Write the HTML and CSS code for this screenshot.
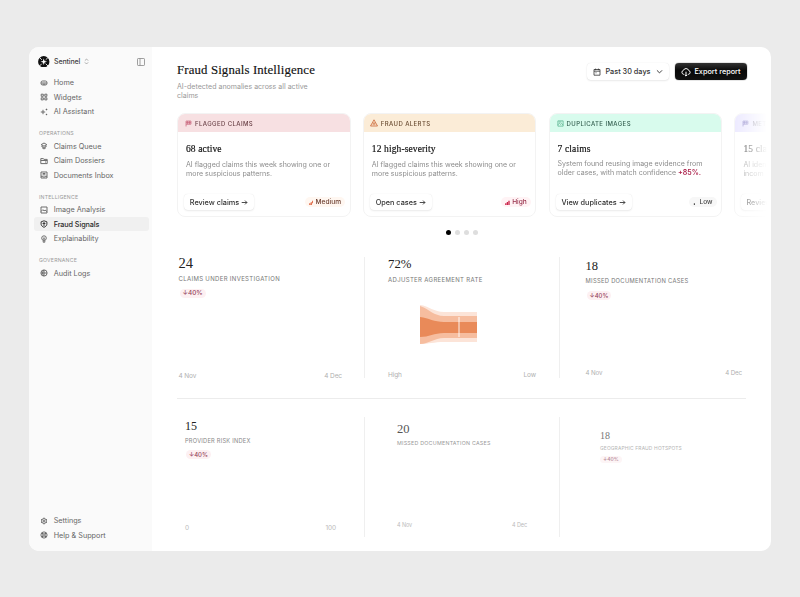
FILE: index.html
```html
<!DOCTYPE html>
<html lang="en">
<head>
<meta charset="utf-8">
<title>Fraud Signals Intelligence</title>
<link rel="stylesheet" href="styles.css">
</head>
<body>
<div class="window">
  <aside class="sidebar">
    <div class="brand">
      <svg class="logo" viewBox="0 0 12 12"><circle cx="6" cy="6" r="5.900"/><path d="M1.500 1.500 4 4M10.500 1.500 8 4M1.500 10.500 4 8M10.500 10.500 8 8" stroke="#fff" stroke-width=".9"/><path d="M6 2.600 6.900 5.100 9.400 6 6.900 6.900 6 9.400 5.100 6.900 2.600 6 5.100 5.100Z" fill="#fff"/></svg>
      <span class="brand-name">Sentinel</span>
      <svg class="updown" viewBox="0 0 6 8"><path d="M1 3l2-2 2 2M1 5l2 2 2-2"/></svg>
      <svg class="panel" viewBox="0 0 8 8"><rect x=".5" y=".5" width="7" height="7" rx=".7"/><path d="M3 .5v7"/></svg>
    </div>
    <nav>
      <a class="item"><svg viewBox="0 0 8 8"><rect x="1" y="2" width="6" height="4" rx="1.600"/><path d="M1 4h6M2.500 5.200h3"/></svg>Home</a>
      <a class="item"><svg viewBox="0 0 8 8"><path d="M1.200 1.200h2.100v2.100H1.200ZM4.800 1.200h2.100v2.100H4.800ZM1.200 4.800h2.100v2.100H1.200ZM4.800 4.800h2.100v2.100H4.800Z"/></svg>Widgets</a>
      <a class="item"><svg viewBox="0 0 8 8"><path d="M3 1.800v4.400M.8 4h4.400M6.500.7v1.600M5.700 1.500h1.600M6.500 5.800v1.400M5.800 6.500h1.400"/></svg>AI Assistant</a>
      <h2>OPERATIONS</h2>
      <a class="item"><svg viewBox="0 0 8 8"><path d="M4 1 6.800 2.600 4 4.200 1.200 2.600ZM1.200 4 4 5.600 6.800 4M2 5.600 4 7l2-1.400"/></svg>Claims Queue</a>
      <a class="item"><svg viewBox="0 0 8 8"><path d="M.8 1.600h2.400l.8.800h3.200v4.200H.8ZM.8 3.500h6.400M5 5h1"/></svg>Claim Dossiers</a>
      <a class="item"><svg viewBox="0 0 8 8"><path d="M1 1h6v6H1ZM1 5.300h1.800l.5.700h1.400l.5-.7H7M2.600 2.500h2.800M2.600 3.800h2.800"/></svg>Documents Inbox</a>
      <h2>INTELLIGENCE</h2>
      <a class="item"><svg viewBox="0 0 8 8"><path d="M1 1h6v6H1ZM1 5.500l1.800-1.800 1.300 1.200L5 4l2 1.600"/></svg>Image Analysis</a>
      <a class="item active"><svg viewBox="0 0 8 8"><path d="M4 .8 6.900 1.800v2.400c0 1.500-1.600 2.500-2.900 3.100C2.700 6.700 1.100 5.700 1.100 4.200V1.800ZM4 2v4M2.600 3.500h2.800"/></svg>Fraud Signals</a>
      <a class="item"><svg viewBox="0 0 8 8"><circle cx="4" cy="3.100" r="2.300"/><path d="M3.200 5.300v1.900h1.600V5.300M4 3v2.200M3.300 3h1.400"/></svg>Explainability</a>
      <h2>GOVERNANCE</h2>
      <a class="item"><svg viewBox="0 0 8 8"><circle cx="4" cy="4" r="3.100"/><path d="M4 1v6M1 4h6M4 1c-2 1.600-2 4.400 0 6"/></svg>Audit Logs</a>
    </nav>
    <div class="bottom">
      <a class="item"><svg viewBox="0 0 8 8"><circle cx="4" cy="4" r="2.400"/><circle cx="4" cy="4" r=".8"/><path d="M4 .6v1M4 6.400v1M1 2.300l.9.500M6.100 5.200l.9.500M1 5.700l.9-.5M6.100 2.800l.9-.5"/></svg>Settings</a>
      <a class="item"><svg viewBox="0 0 8 8"><circle cx="4" cy="4" r="3.100"/><circle cx="4" cy="4" r="1.200"/><path stroke-width="1.200" d="M1.900 1.900l1.200 1.200M6.100 1.900 4.900 3.100M1.900 6.100l1.200-1.200M6.100 6.100 4.900 4.900"/></svg>Help &amp; Support</a>
    </div>
  </aside>

  <main>
    <header>
      <div>
        <h1>Fraud Signals Intelligence</h1>
        <p class="lead">AI-detected anomalies across all active claims</p>
      </div>
      <div class="actions">
        <button class="btn range"><svg viewBox="0 0 8 8"><path d="M1 1.500h6v5.700H1ZM1 3.200h6M2.600.6v1.600M5.400.6v1.600M2.500 4.800h1"/></svg><span>Past 30 days</span><svg class="chev" viewBox="0 0 6 6"><path d="M.8 2 3 4.200 5.200 2"/></svg></button>
        <button class="btn export"><svg viewBox="0 0 10 10"><path d="M3 7.300H2.600A2 2 0 0 1 2.400 3.400 2.800 2.800 0 0 1 7.700 3.500 1.950 1.950 0 0 1 7.500 7.300H7M5 4.700v4.300M3.700 7.800 5 9.100l1.300-1.300"/></svg><span>Export report</span></button>
      </div>
    </header>

    <section class="carousel">
      <article class="card red">
        <h3><svg viewBox="0 0 8 8"><path d="M1.200 7.400V1.200h5.600v3.600H1.200M3 1.200v3.600M5 1.200v3.600M1.200 3h5.600"/></svg>FLAGGED CLAIMS</h3>
        <div class="body">
          <strong class="figure">68 active</strong>
          <p>AI flagged claims this week showing one or<br>more suspicious patterns.</p>
          <div class="foot"><button class="btn go w1">Review claims <svg viewBox="0 0 8 8"><path d="M.8 4h6M4.600 1.800 6.800 4 4.600 6.200"/></svg></button>
          <span class="tag medium"><svg viewBox="0 0 6 6"><path d="M.3 4h1.300v2H.3ZM2 2.800h1.400V6H2ZM3.800 1h1v3h-1Z"/></svg>Medium</span></div>
        </div>
      </article>
      <article class="card amber">
        <h3><svg viewBox="0 0 8 8"><path d="M4 .8 7.500 7h-7ZM4 3v2M4 5.600v.6M2.500 5h3"/></svg>FRAUD ALERTS</h3>
        <div class="body">
          <strong class="figure">12 high-severity</strong>
          <p>AI flagged claims this week showing one or<br>more suspicious patterns.</p>
          <div class="foot"><button class="btn go w2">Open cases <svg viewBox="0 0 8 8"><path d="M.8 4h6M4.600 1.800 6.800 4 4.600 6.200"/></svg></button>
          <span class="tag high"><svg viewBox="0 0 6 6"><path d="M.2 4h1.500v2H.2ZM2.100 2.500h1.500V6H2.100ZM4 .8h1.600V6H4Z"/></svg>High</span></div>
        </div>
      </article>
      <article class="card green">
        <h3><svg viewBox="0 0 8 8"><path d="M1 1h6v6H1ZM1 5.500l1.800-1.800 1.300 1.200L5 4l2 1.600M2 2.300h3"/></svg>DUPLICATE IMAGES</h3>
        <div class="body">
          <strong class="figure">7 claims</strong>
          <p>System found reusing image evidence from<br>older cases, with match confidence <b>+85%.</b></p>
          <div class="foot"><button class="btn go w3">View duplicates <svg viewBox="0 0 8 8"><path d="M.8 4h6M4.600 1.800 6.800 4 4.600 6.200"/></svg></button>
          <span class="tag low"><svg viewBox="0 0 6 6"><path d="M1 3.800h1.300V6H1Z"/></svg>Low</span></div>
        </div>
      </article>
      <article class="card violet">
        <h3><svg viewBox="0 0 8 8"><path d="M1.200 7.400V1.200h5.600v3.600H1.200M3 1.200v3.600M5 1.200v3.600M1.200 3h5.600"/></svg>MET</h3>
        <div class="body">
          <strong class="figure">15 claims</strong>
          <p>AI iden<br>incom</p>
          <div class="foot"><button class="btn go cut">Review</button></div>
        </div>
      </article>
    </section>
    <div class="dots"><i class="on"></i><i></i><i></i><i></i></div>

    <section class="stats top">
      <div class="stat s1">
        <strong>24</strong><h4>CLAIMS UNDER INVESTIGATION</h4><span class="delta">↓40%</span>
        <div class="axis"><span>4 Nov</span><span>4 Dec</span></div>
      </div>
      <div class="stat s2">
        <strong>72%</strong><h4>ADJUSTER AGREEMENT RATE</h4>
        <svg class="funnel" viewBox="0 0 58 42"><path fill="#fce4d8" d="M0 1C9 2 14 8 24 8H57V38H24C14 38 9 40 0 40Z"/><path fill="#f6bd9f" d="M0 2C9 5 14 12 24 12H57V34H24C14 34 9 40 0 40Z"/><path fill="#e98a59" d="M0 13C9 14 14 18 24 18H57V29H24C14 29 9 33 0 33Z"/><path d="M39 13V33" stroke="#fff" stroke-width=".9"/></svg>
        <div class="axis"><span>High</span><span>Low</span></div>
      </div>
      <div class="stat s3">
        <strong>18</strong><h4>MISSED DOCUMENTATION CASES</h4><span class="delta">↓40%</span>
        <div class="axis"><span>4 Nov</span><span>4 Dec</span></div>
      </div>
    </section>
    <section class="stats lower">
      <div class="stat s4">
        <strong>15</strong><h4>PROVIDER RISK INDEX</h4><span class="delta">↓40%</span>
        <div class="axis"><span>0</span><span>100</span></div>
      </div>
      <div class="stat s5">
        <strong>20</strong><h4>MISSED DOCUMENTATION CASES</h4>
        <div class="axis"><span>4 Nov</span><span>4 Dec</span></div>
      </div>
      <div class="stat s6">
        <strong>18</strong><h4>GEOGRAPHIC FRAUD HOTSPOTS</h4><span class="delta">↓40%</span>
      </div>
    </section>
  </main>
</div>
</body>
</html>
```
FILE: styles.css
```css
* { box-sizing: border-box; }
body { margin: 0; height: 597px; overflow: hidden; padding: 47px 29px; background: #ebebeb; font-family: Inter, sans-serif; color: #222; }
h1, h2, h3, h4, p { margin: 0; font-weight: 400; }
svg { fill: none; stroke: currentColor; stroke-width: .8; flex: none; }
button { font-family: inherit; }

.window { display: flex; width: 742px; height: 503.500px; border-radius: 10px; overflow: hidden; background: #fff; }

.sidebar { width: 123px; flex: none; background: #fafafa; display: flex; flex-direction: column; padding: 8px 3px 8px 5px; }
.brand { display: flex; align-items: center; height: 13px; padding-left: 4px; margin-bottom: 7.300px; }
.logo { width: 11.500px; height: 11.500px; fill: #111; stroke: none; }
.brand-name { font-size: 7px; font-weight: 500; color: #444; margin-left: 4.500px; letter-spacing: -.1px; }
.updown { width: 5px; height: 7px; margin-left: 4px; color: #888; }
.panel { width: 8px; height: 8px; margin-left: auto; margin-right: 4.500px; color: #888; }
.item { display: flex; align-items: center; height: 14.500px; padding-left: 5.500px; font-size: 7.250px; color: #666; border-radius: 3px; gap: 6.200px; }
.item svg { width: 8px; height: 8px; color: #666; stroke-width: .95; }
.item.active { background: #f0f0f0; color: #2b2b2b; font-weight: 500; letter-spacing: -.1px; }
.item.active svg { color: #333; }
.sidebar h2 { font-size: 5.200px; line-height: 8px; color: #999; padding-left: 5px; margin: 10.300px 0 1.700px; letter-spacing: .2px; }
.bottom { margin-top: auto; }

main { flex: 1; min-width: 0; padding: 15px 0 0 25px; }
header { display: flex; justify-content: space-between; padding-right: 24px; height: 51px; }
h1 { font: 400 12.800px/16px "Liberation Serif", serif; color: #111; letter-spacing: .14px; -webkit-text-stroke: .15px #111; }
.lead { width: 145px; margin-top: 3.500px; font-size: 7.050px; line-height: 9px; color: #999; }
.actions { display: flex; gap: 6px; }
.btn { display: flex; align-items: center; justify-content: center; border: 0; border-radius: 4px; padding: 0; background: #fff; font-size: 7.300px; font-weight: 500; color: #333; white-space: nowrap; box-shadow: 0 0 1px #0002, 0 1px 2px #00000014; }
.range { width: 82px; height: 17px; margin-top: 1px; gap: 4px; }
.range svg { width: 8px; height: 8px; }
.range .chev { width: 7px; height: 7px; margin-left: 1px; }
.export { width: 72px; height: 17px; margin-top: 1px; gap: 3px; color: #fff; background: linear-gradient(#333, #080808 45%, #111); box-shadow: 0 0 1px #000; }
.export svg { width: 10px; height: 10px; stroke-width: 1; }

.carousel { display: flex; gap: 12.300px; overflow: hidden; height: 106px; padding: 0 0 2px 0; -webkit-mask-image: linear-gradient(90deg, #000 548px, transparent 590px); mask-image: linear-gradient(90deg, #000 548px, transparent 590px); }
.card { flex: none; width: 173.500px; height: 103.500px; border: 1px solid #f3f3f3; border-radius: 8px; overflow: hidden; }
.card h3 { display: flex; align-items: center; height: 18px; padding-left: 7px; gap: 3px; font-size: 6px; letter-spacing: .4px; font-weight: 500; color: #6b4248; }
.card h3 svg { width: 7px; height: 7px; }
.red h3 { background: #f7e0e2; } .red h3 svg { color: #c65a72; }
.amber h3 { background: #fbecd7; color: #6a4c32; padding-left: 6px; } .amber h3 svg { width: 8px; height: 8px; color: #cb6532; }
.green h3 { background: #d8fbed; color: #345f50; } .green h3 svg { color: #4ead88; }
.violet h3 { background: #e7e4ff; color: #79748e; } .violet h3 svg { color: #746bbd; }
.body { padding: 10.500px 4.500px 0 8px; }
.figure { display: block; font: 500 9.500px/13px "Liberation Serif", serif; color: #111; letter-spacing: .12px; -webkit-text-stroke: .18px #111; }
.body p { margin-top: 4px; font-size: 7.050px; line-height: 9.300px; color: #8d8d8d; white-space: nowrap; }
.green .body p { margin-top: 3.500px; }
.body b { color: #ad244d; font-weight: 600; }
.foot { display: flex; align-items: center; justify-content: space-between; margin: 15.500px 0 0 -2px; height: 17px; }
.green .foot { margin-top: 16px; }
.go { height: 16px; gap: 2px; }
.go svg { width: 7px; height: 7px; stroke-width: 1; }
.w1 { width: 70px; } .w2 { width: 62px; } .w3 { width: 76px; }
.cut { width: 62px; padding-left: 5px; justify-content: flex-start; }
.tag { display: flex; align-items: center; gap: 2px; height: 10px; padding: 0 4px; border-radius: 5px; font-size: 6.600px; font-weight: 500; }
.tag svg { width: 5px; height: 5px; fill: currentColor; stroke: none; }
.medium { background: #fff7f1; color: #6e4032; } .medium svg { color: #dd5b35; }
.high { background: #fff3f5; color: #98304b; } .high svg { color: #cb2349; }
.low { background: #f7f7f7; color: #444; }

.dots { display: flex; justify-content: center; gap: 4.300px; height: 5px; margin: 11px 0 22px; width: 570px; }
.dots i { width: 5px; height: 5px; border-radius: 50%; background: #dedede; }
.dots .on { background: #000; }

.stats { display: grid; grid-template-columns: 188px 195px 186px; width: 569px; }
.top { height: 141.500px; padding-bottom: 20px; border-bottom: 1px solid #ececec; }
.lower { height: 138px; padding-top: 18px; }
.stat { display: flex; flex-direction: column; align-items: flex-start; border-right: 1px solid #efefef; min-width: 0; }
.stat:last-child { border-right: 0; }
.stat strong { font: 400 13px/16px "Liberation Serif", serif; color: #222; }
.stat h4 { font-size: 6px; line-height: 8px; color: #777; letter-spacing: .34px; white-space: nowrap; }
.delta { height: 9px; padding: 0 3px; border-radius: 5px; background: #fdf0f2; color: #96445a; font-size: 6.400px; line-height: 9px; font-weight: 500; }
.axis { display: flex; justify-content: space-between; align-self: stretch; margin-top: auto; font-size: 6.500px; line-height: 8px; color: #b0b0b0; letter-spacing: -.1px; }

.s1 { padding: 0 22px 0 1.500px; }
.s1 strong { font-size: 14.500px; margin-top: -2px; } .s1 h4 { margin: 4px 0 6px; } .s1 .delta { margin-left: 1px; }
.s1 .axis { margin-bottom: -2px; }
.s2 { padding: 0 23px 0 23px; }
.s2 strong { margin-top: -1px; font-size: 12.800px; } .s2 h4 { margin-top: 3.500px; }
.funnel { width: 58px; height: 42px; margin: 20px 0 0 31.500px; stroke: none; }
.s2 .axis { margin-bottom: -1px; }
.s3 { padding: 0 4px 0 25.500px; }
.s3 strong { margin-top: .5px; font-size: 12.500px; } .s3 h4 { margin: 3px 0 6px; font-size: 5.800px; letter-spacing: .3px; } .s3 .delta { font-size: 6px; margin-left: 1px; }
.s3 .axis { margin-bottom: 1px; font-size: 6.200px; }
.s4 { padding: 1px 28px 5px 8px; }
.s4 strong { font-size: 12px; } .s4 h4 { font-size: 5.700px; margin: 3px 0 5px; letter-spacing: .23px; color: #888; } .s4 .delta { margin-left: 1px; font-size: 6px; }
.s5 { padding: 4px 32px 8px 32px; }
.s5 strong { color: #555; font-size: 12.500px; } .s5 h4 { margin-top: 2px; font-size: 5.300px; letter-spacing: .25px; color: #999; }
.s5 .axis { font-size: 5.500px; color: #bbb; }
.s6 { padding: 11px 0 0 40px; }
.s6 strong { font-size: 10px; color: #777; } .s6 h4 { font-size: 4.900px; letter-spacing: .16px; color: #b5b5b5; } .s6 .delta { height: 7px; line-height: 7px; margin: 4px 0 0 0; font-size: 5px; color: #b68a96; background: #fdf5f6; }
.s4 .axis { color: #bbb; }
```
